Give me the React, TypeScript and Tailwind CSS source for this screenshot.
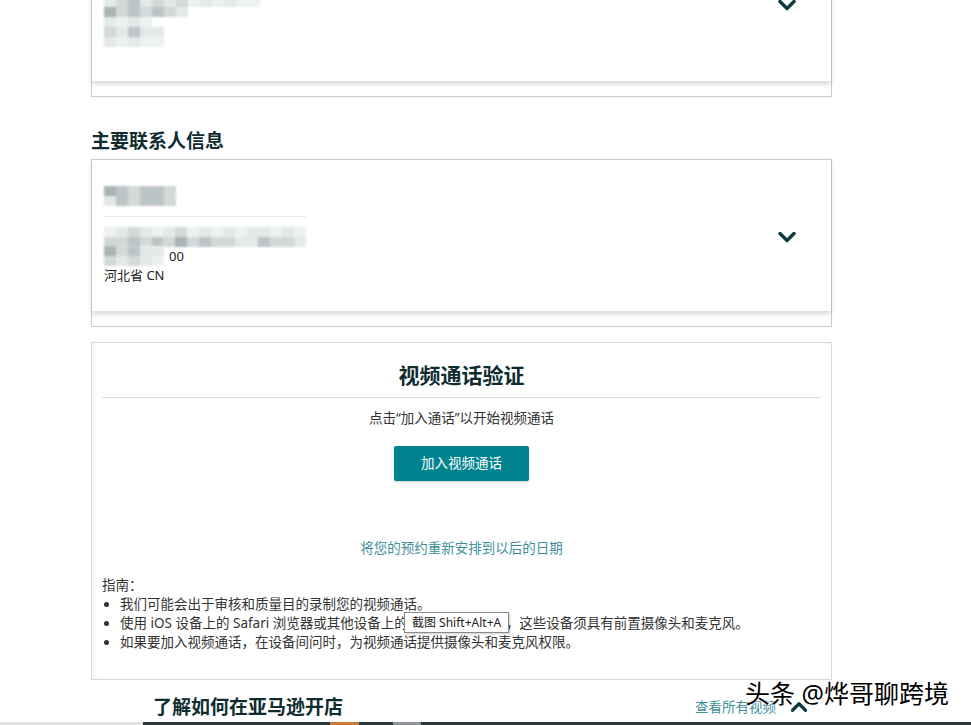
import { ChevronDown, ChevronUp } from 'lucide-react';

const font = { fontFamily: '"Noto Sans", "Noto Sans CJK SC", sans-serif' };

// pixelated privacy blur, rows of tiles
function Mosaic({ rows }: { rows: string[][] }) {
  return (
    <div className="flex flex-col blur-[1px]">
      {rows.map((row, i) => (
        <div key={i} className="flex">
          {row.map((c, j) => (
            <div key={j} className="w-[12px] h-[10px]" style={{ backgroundColor: c }} />
          ))}
        </div>
      ))}
    </div>
  );
}

function Card({ children, className = '' }: { children: React.ReactNode; className?: string }) {
  return (
    <div className={`border border-[#c9cdcd] bg-white pb-[15px] ${className}`}>
      <div className="bg-white shadow-[0_3px_5px_rgba(0,0,0,0.16)] relative">{children}</div>
    </div>
  );
}

const g1 = '#d3d9d9', g2 = '#bcc5c5', g3 = '#e3e8e8', g4 = '#a9b4b4', g5 = '#eef1f1';

export default function App() {
  return (
    <div className="relative w-[971px] h-[725px] overflow-hidden bg-white text-[#111]" style={font}>
      <div className="pl-[91px] w-[832px]">

        {/* --- card cut at the top --- */}
        <Card className="-mt-[60px]">
          <div className="h-[140px] flex items-center justify-between pl-[12px] pr-[30px]">
            <div className="flex flex-col mt-[12px]">
              <Mosaic rows={[
                [g1, g3, g1, g2, g1, g3, g1, g5, g3, g5, g3, g5, g5],
                [g3, g1, g2, g3, g1, g3, g1, g5, g3, g5, g3, g5, g5],
                [g4, g1, g2, g1, g2, g1, g3],
                [g3, g5, g3, g5],
                [g1, g3, g2, g3, g3],
                [g3, g5, g3, g5, g5],
              ]} />
            </div>
            <ChevronDown className="w-[28px] h-[28px] text-[#0f3a40] -mt-[12px]" strokeWidth={3} />
          </div>
        </Card>

        <h2 className="mt-[32px] mb-[6px] text-[19px] font-bold text-[#0f2d31] leading-[24px]">主要联系人信息</h2>

        {/* --- primary contact card --- */}
        <Card>
          <div className="h-[151px] flex items-center justify-between pl-[12px] pr-[30px]">
            <div className="w-[202px] text-[13px] leading-[19px] text-[#222]">
              <div className="h-[19px] flex items-center">
                <Mosaic rows={[[g4, g2, g1, g2, g2, g1], [g3, g2, g1, g2, g2, g1]]} />
              </div>
              <div className="border-t border-[#e8eaea] my-[10px]" />
              <Mosaic rows={[
                [g5, g3, g1, g3, g5, g3, g1, g5, g3, g5, g3, g5, g3, g3, g5, g3, g5],
                [g1, g1, g2, g1, g2, g1, g4, g1, g2, g1, g1, g3, g3, g2, g1, g1, g3],
              ]} />
              <div className="flex items-center h-[19px]">
                <Mosaic rows={[[g4, g1, g2, g3, g3], [g1, g3, g1, g3, g5]]} />
                <span className="ml-[5px]">00</span>
              </div>
              <div>河北省 CN</div>
            </div>
            <ChevronDown className="w-[28px] h-[28px] text-[#0f3a40] mt-[2px]" strokeWidth={3} />
          </div>
        </Card>

        {/* --- video call verification --- */}
        <div className="mt-[15px] border border-[#d6d9d9] shadow-[inset_3px_0_4px_rgba(0,0,0,0.04)] px-[10px] pt-[17px] h-[338px] bg-white">
          <h3 className="text-center text-[21px] font-bold text-[#0f2d31] leading-[30px]">视频通话验证</h3>
          <div className="border-t border-[#dcdcdc] mt-[7px]" />
          <p className="text-center text-[13.5px] leading-[20px] text-[#333] mt-[10px]">点击“加入通话”以开始视频通话</p>
          <div className="flex justify-center mt-[18px]">
            <button className="w-[135px] h-[35px] bg-[#00838f] text-white text-[13.5px] rounded-[2px] shadow-[0_1px_2px_rgba(0,0,0,0.2)]">加入视频通话</button>
          </div>
          <p className="text-center text-[13.5px] leading-[20px] text-[#3f8f9a] mt-[57px]">将您的预约重新安排到以后的日期</p>
          <div className="text-[13.5px] leading-[19px] text-[#333] mt-[18px] relative">
            <div>指南：</div>
            <ul className="list-disc pl-[18px]">
              <li>我们可能会出于审核和质量目的录制您的视频通话。</li>
              <li>使用 iOS 设备上的 Safari 浏览器或其他设备上的 Chrome 浏览器，这些设备须具有前置摄像头和麦克风。</li>
              <li>如果要加入视频通话，在设备间问时，为视频通话提供摄像头和麦克风权限。</li>
            </ul>
            {/* screenshot tool tooltip */}
            <div className="absolute left-[302px] top-[36px] h-[21px] px-[7px] bg-white border border-[#8a8a8a] shadow-[1px_1px_2px_rgba(0,0,0,0.2)] text-[12px] leading-[19px] text-[#222] whitespace-nowrap">
              截图 Shift+Alt+A
            </div>
          </div>
        </div>
      </div>

      {/* --- learn how to sell --- */}
      <div className="flex items-center justify-between pl-[153px] w-[812px] mt-[14px]">
        <h2 className="text-[19px] font-bold text-[#0f2d31] leading-[26px]">了解如何在亚马逊开店</h2>
        <div className="flex items-center gap-[10px]">
          <span className="text-[13.5px] text-[#3f8f9a]">查看所有视频</span>
          <ChevronUp className="w-[26px] h-[26px] text-[#0f3a40]" strokeWidth={3} />
        </div>
      </div>
      <div className="absolute left-0 right-0 bottom-0 h-[3px] flex bg-[#e3e3e3]">
        <div className="ml-[143px] w-[187px] bg-[#2b3a3c]" />
        <div className="w-[29px] bg-[#c87a3a]" />
        <div className="w-[34px] bg-[#2b3a3c]" />
        <div className="w-[28px] bg-[#8d9696]" />
        <div className="flex-1 bg-[#2b3a3c]" />
      </div>

      {/* watermark */}
      <div
        className="absolute left-[745px] top-[675px] text-[25px] text-black whitespace-nowrap"
        style={{ textShadow: '0 0 2px #fff, 0 0 2px #fff, 0 0 2px #fff' }}
      >
        头条 @烨哥聊跨境
      </div>
    </div>
  );
}
